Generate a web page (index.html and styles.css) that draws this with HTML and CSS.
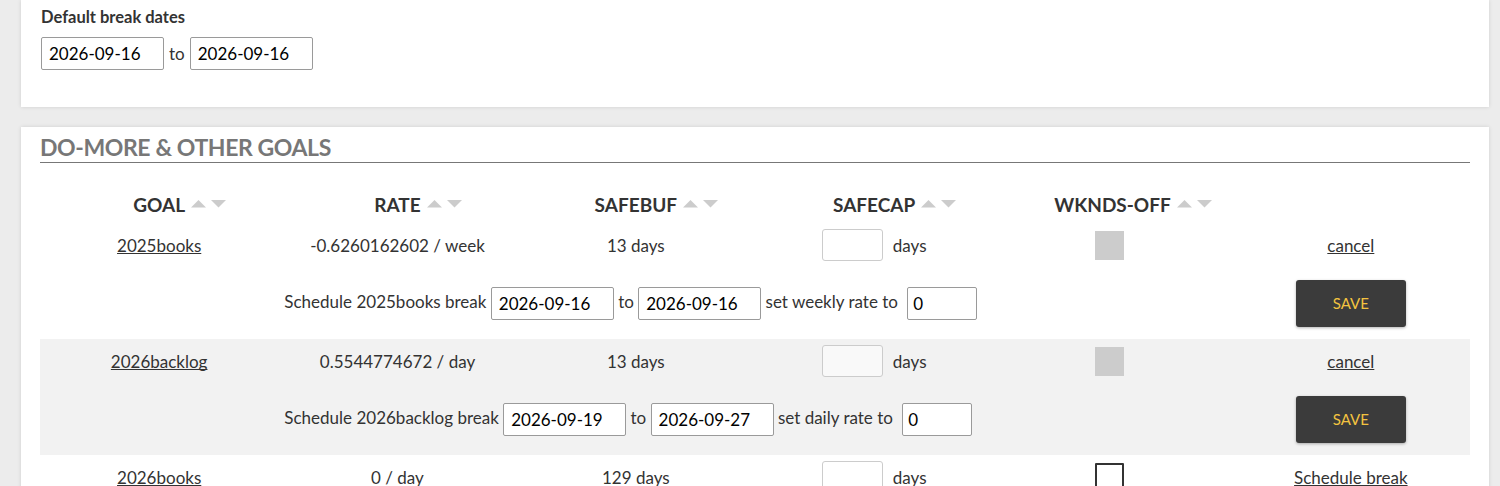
FILE: index.html
```html
<!DOCTYPE html>
<html>
<head>
<meta charset="utf-8">
<link rel="stylesheet" href="styles.css">
</head>
<body>
<div class="page">
  <section class="card card-top">
    <div class="label">Default break dates</div>
    <div class="dates">
      <input class="date" type="text" value="2026-09-16"> to <input class="date" type="text" value="2026-09-16">
    </div>
  </section>

  <section class="card card-goals">
    <h2 class="title">DO-MORE &amp; OTHER GOALS</h2>
    <table class="goals">
      <colgroup><col><col><col><col><col><col></colgroup>
      <thead>
        <tr>
          <th><span class="lbl">GOAL<svg class="arrows" width="36" height="8" viewBox="0 0 36 8"><path d="M0 7.5 L7.5 0 L15 7.5 Z" fill="#ccc"/><path d="M20 0 L35 0 L27.5 7.5 Z" fill="#ccc"/></svg></span></th>
          <th><span class="lbl">RATE<svg class="arrows" width="36" height="8" viewBox="0 0 36 8"><path d="M0 7.5 L7.5 0 L15 7.5 Z" fill="#ccc"/><path d="M20 0 L35 0 L27.5 7.5 Z" fill="#ccc"/></svg></span></th>
          <th><span class="lbl">SAFEBUF<svg class="arrows" width="36" height="8" viewBox="0 0 36 8"><path d="M0 7.5 L7.5 0 L15 7.5 Z" fill="#ccc"/><path d="M20 0 L35 0 L27.5 7.5 Z" fill="#ccc"/></svg></span></th>
          <th><span class="lbl">SAFECAP<svg class="arrows" width="36" height="8" viewBox="0 0 36 8"><path d="M0 7.5 L7.5 0 L15 7.5 Z" fill="#ccc"/><path d="M20 0 L35 0 L27.5 7.5 Z" fill="#ccc"/></svg></span></th>
          <th><span class="lbl">WKNDS-OFF<svg class="arrows" width="36" height="8" viewBox="0 0 36 8"><path d="M0 7.5 L7.5 0 L15 7.5 Z" fill="#ccc"/><path d="M20 0 L35 0 L27.5 7.5 Z" fill="#ccc"/></svg></span></th>
          <th></th>
        </tr>
      </thead>
      <tbody>
        <tr class="goal-row">
          <td><a href="#">2025books</a></td>
          <td>-0.6260162602 / week</td>
          <td>13 days</td>
          <td><span class="cap"><input class="capin" type="text"> days</span></td>
          <td><input class="chk chk-off" type="checkbox" disabled></td>
          <td><a href="#">cancel</a></td>
        </tr>
        <tr class="break-row">
          <td></td>
          <td colspan="4" class="break-cell">Schedule 2025books break <input class="date" type="text" value="2026-09-16"> to <input class="date" type="text" value="2026-09-16"> set weekly rate to <input class="rate" type="text" value="0"></td>
          <td><button class="save">SAVE</button></td>
        </tr>
      </tbody>
      <tbody class="alt">
        <tr class="goal-row">
          <td><a href="#">2026backlog</a></td>
          <td>0.5544774672 / day</td>
          <td>13 days</td>
          <td><span class="cap"><input class="capin" type="text"> days</span></td>
          <td><input class="chk chk-off" type="checkbox" disabled></td>
          <td><a href="#">cancel</a></td>
        </tr>
        <tr class="break-row">
          <td></td>
          <td colspan="4" class="break-cell">Schedule 2026backlog break <input class="date" type="text" value="2026-09-19"> to <input class="date" type="text" value="2026-09-27"> set daily rate to <input class="rate" type="text" value="0"></td>
          <td><button class="save">SAVE</button></td>
        </tr>
      </tbody>
      <tbody>
        <tr class="goal-row">
          <td><a href="#">2026books</a></td>
          <td>0 / day</td>
          <td>129 days</td>
          <td><span class="cap"><input class="capin" type="text"> days</span></td>
          <td><input class="chk" type="checkbox"></td>
          <td><a href="#">Schedule break</a></td>
        </tr>
      </tbody>
    </table>
  </section>
</div>
</body>
</html>
```

FILE: styles.css
```css
html, body {
  margin: 0;
  padding: 0;
  background: #ececec;
  height: 486px;
  overflow: hidden;
}
body {
  font-family: Lato, "Liberation Sans", sans-serif;
  font-size: 17px;
  color: #333;
}
.page {
  padding: 0 11px 0 21px;
}
.card {
  background: #fff;
  box-shadow: 0 0 4px rgba(0, 0, 0, 0.12);
}
.card-top {
  padding: 6px 19px 37px 20px;
}
.label {
  font-weight: bold;
  font-size: 16.5px;
  line-height: 22px;
  margin-bottom: 9px;
  color: #333;
}
.dates {
  height: 33px;
  display: flex;
  align-items: center;
  gap: 5px;
}
input {
  font-family: inherit;
  box-sizing: border-box;
  margin: 0;
}
.date {
  width: 123px;
  height: 33px;
  border: 1px solid #9a9a9a;
  border-radius: 2px;
  padding: 0 7px;
  font-size: 17px;
  color: #000;
  background: #fff;
  vertical-align: middle;
}
.rate {
  width: 70px;
  height: 33px;
  margin-left: 5px;
  border: 1px solid #9a9a9a;
  border-radius: 2px;
  padding: 0 5px;
  font-size: 17px;
  color: #000;
  background: #fff;
  vertical-align: middle;
}
.card-goals {
  margin-top: 20px;
  padding: 5px 19px 40px 19px;
}
.title {
  margin: 0;
  font-size: 23px;
  letter-spacing: -0.4px;
  line-height: 30px;
  font-weight: bold;
  color: #777;
  border-bottom: 1px solid #777;
  padding-bottom: 0;
}
.goals {
  width: 100%;
  table-layout: fixed;
  border-collapse: collapse;
  margin-top: 22px;
}
.goals th {
  height: 38px;
  padding: 0;
  font-size: 19px;
  font-weight: bold;
  color: #333;
  text-align: center;
  vertical-align: middle;
}
.lbl {
  position: relative;
}
.arrows {
  position: absolute;
  left: 100%;
  top: 50%;
  margin-left: 6px;
  margin-top: -4px;
}
.goals td {
  padding: 0;
  text-align: center;
  vertical-align: middle;
}
.goal-row td {
  height: 44px;
}
.break-row td {
  height: 72px;
}
.alt td {
  background: #f2f2f2;
}
a {
  color: #333;
  text-decoration: underline;
  text-underline-offset: 1px;
  text-decoration-skip-ink: none;
}
.cap {
  display: inline-flex;
  align-items: center;
  gap: 10px;
}
.capin {
  width: 61px;
  height: 32px;
  border: 1px solid #ccc;
  border-radius: 3px;
  background: #fff;
}
.alt .capin {
  background: #f9f9f9;
}
.chk {
  appearance: none;
  -webkit-appearance: none;
  width: 29px;
  height: 29px;
  margin: 0 6px 0 0;
  box-sizing: border-box;
  border: 2px solid #333;
  border-radius: 1px;
  background: #fff;
  vertical-align: middle;
}
.chk-off {
  border: none;
  background: #ccc;
  border-radius: 0;
}
.goals td.break-cell {
  white-space: nowrap;
  text-align: left;
  padding-left: 6px;
}
.save {
  width: 110px;
  height: 47px;
  border: none;
  border-radius: 3px;
  background: #3b3b3b;
  color: #f3c340;
  font-family: inherit;
  font-size: 15px;
  box-shadow: 0 1px 3px rgba(0, 0, 0, 0.3);
  cursor: pointer;
}
```
